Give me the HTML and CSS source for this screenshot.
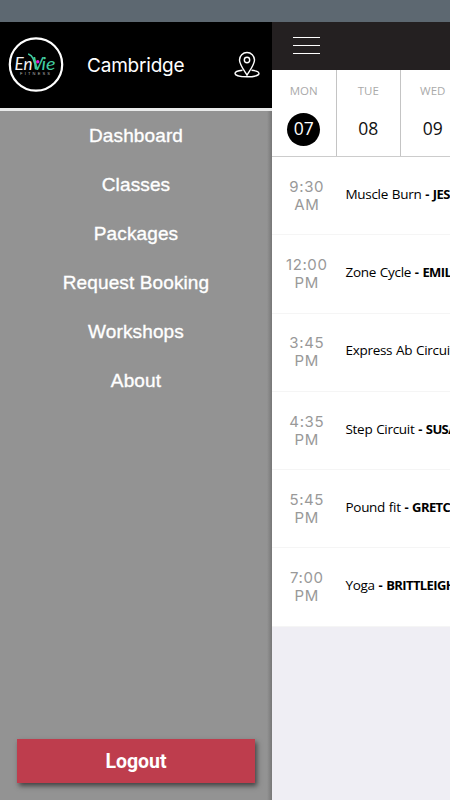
FILE: index.html
```html
<!DOCTYPE html>
<html lang="en">
  <head>
    <meta charset="UTF-8" />
    <meta name="viewport" content="width=device-width, initial-scale=1.0" />
    <title>EnVie Fitness</title>
    <link rel="stylesheet" href="styles.css">
  </head>
  <body>
    <div class="status-bar"></div>
    <div class="app">
      <aside class="drawer">
        <header class="drawer-header">
          <svg class="logo" viewBox="0 0 56 56" width="56" height="56">
            <circle cx="28" cy="27.500" r="26.2" fill="#000" stroke="#fff" stroke-width="2.2" />
            <text class="logo-name" x="6.5" y="32.500" fill="#f4f4f4" textLength="18" lengthAdjust="spacingAndGlyphs">En</text>
            <text class="logo-name" x="24.500" y="32.500" fill="#42cda0">V</text>
            <text class="logo-name" x="33.500" y="32.500" fill="#42cda0" textLength="14" lengthAdjust="spacingAndGlyphs">ie</text>
            <path d="M20.800 17.200c4 1.500 6 6 6.700 14.500" fill="none" stroke="#42cda0" stroke-width="1.600" stroke-linecap="round" />
            <circle cx="29.700" cy="24.800" r="1.700" fill="#e01fd4" />
            <text class="logo-sub" x="12" y="37.500" textLength="30">FITNESS</text>
          </svg>
          <h1>Cambridge</h1>
          <svg class="pin" viewBox="0 0 26 28" width="26" height="28" fill="none" stroke="#fff" stroke-width="1.400">
            <path d="M13 24.200C10.500 20 5.500 13.500 5.500 9a7.500 7.500 0 0 1 15 0c0 4.500-5 11-7.500 15.200z" />
            <circle cx="13" cy="9" r="2.700" />
            <path d="M8.500 19.300C4 19.700 1 20.900 1 22.500c0 1.900 5.200 3.300 12 3.300s12-1.400 12-3.300c0-1.600-3-2.800-7.500-3.200" />
          </svg>
        </header>
        <nav class="menu">
          <a href="#">Dashboard</a>
          <a href="#">Classes</a>
          <a href="#">Packages</a>
          <a href="#">Request Booking</a>
          <a href="#">Workshops</a>
          <a href="#">About</a>
        </nav>
        <button class="logout">Logout</button>
      </aside>
      <main class="schedule">
        <div class="topbar">
          <button class="menu-btn" aria-label="Menu"><span></span><span></span><span></span></button>
        </div>
        <div class="days">
          <div class="day active"><span>MON</span><b>07</b></div>
          <div class="day"><span>TUE</span><b>08</b></div>
          <div class="day"><span>WED</span><b>09</b></div>
        </div>
        <ul class="classes">
          <li><time>9:30<br>AM</time><p>Muscle Burn <strong>- JESS</strong></p></li>
          <li><time>12:00<br>PM</time><p>Zone Cycle <strong>- EMILY</strong></p></li>
          <li><time>3:45<br>PM</time><p>Express Ab Circuit</p></li>
          <li><time>4:35<br>PM</time><p>Step Circuit <strong>- SUSAN</strong></p></li>
          <li><time>5:45<br>PM</time><p>Pound fit <strong>- GRETCHEN</strong></p></li>
          <li><time>7:00<br>PM</time><p>Yoga <strong>- BRITTLEIGH</strong></p></li>
        </ul>
      </main>
    </div>
  </body>
</html>
```
FILE: styles.css
```css
* {
  margin: 0;
  padding: 0;
  box-sizing: border-box;
}

body {
  height: 100vh;
  overflow: hidden;
  font-family: "Liberation Sans", Arial, sans-serif;
  background: #efeef4;
}

.status-bar {
  height: 22px;
  background: #5d6871;
}

.app {
  display: flex;
  height: calc(100vh - 22px);
}

/* Side drawer */
.drawer {
  flex: 0 0 272px;
  display: flex;
  flex-direction: column;
  background: linear-gradient(to left, #777 0, #939393 5px);
}

.drawer-header {
  display: flex;
  align-items: center;
  height: 89px;
  padding: 0 12px 0 8px;
  background: #000;
  border-bottom: 3px solid #e9eaea;
}

.logo-name {
  font: italic 17px "Lato", sans-serif;
}

.logo-sub {
  font: 4px "Liberation Sans", sans-serif;
  fill: #bbb;
}

.drawer-header h1 {
  margin-left: 23px;
  font-family: "Inter", sans-serif;
  font-size: 19px;
  font-weight: 400;
  letter-spacing: -0.2px;
  color: #fff;
}

.pin {
  margin-left: auto;
}

.menu {
  flex: 1;
  display: flex;
  flex-direction: column;
  align-items: center;
}

.menu a {
  line-height: 49px;
  font-size: 19px;
  letter-spacing: 0.12px;
  color: #fff;
  text-decoration: none;
  -webkit-text-stroke: 0.35px #fff;
}

.logout {
  height: 44px;
  margin: 0 17px 17px;
  border: none;
  background: #be3d4d;
  box-shadow: 2px 3px 5px rgba(0, 0, 0, 0.55);
  color: #fff;
  font-family: "Roboto", sans-serif;
  font-size: 19.5px;
  font-weight: 700;
}

/* Schedule */
.schedule {
  flex: 1;
  min-width: 0;
  overflow: hidden;
}

.topbar {
  display: flex;
  height: 48px;
  padding: 15px 21px;
  background: #242021;
}

.menu-btn {
  display: flex;
  flex-direction: column;
  justify-content: space-between;
  width: 27px;
  height: 17px;
  border: none;
  background: none;
}

.menu-btn span {
  width: 27px;
  height: 1px;
  background: #fff;
}

.days {
  display: flex;
  width: 193px;
  height: 87px;
  background: #fff;
  border-bottom: 1px solid #ccc;
}

.day {
  flex: 0 0 64.5px;
  display: flex;
  flex-direction: column;
  align-items: center;
  padding-top: 12px;
  border-right: 1px solid #c4c4c4;
  font-family: "Open Sans", sans-serif;
}

.day span {
  line-height: 18px;
  font-size: 11.5px;
  color: #aaa;
}

.day b {
  width: 33px;
  height: 33px;
  margin-top: 13px;
  border-radius: 50%;
  line-height: 31px;
  font-size: 17.5px;
  font-weight: 400;
  text-align: center;
  color: #111;
}

.day.active b {
  background: #000;
  color: #fff;
}

.classes {
  list-style: none;
}

.classes li {
  display: flex;
  align-items: center;
  height: 78.3px;
  background: #fff;
  border-bottom: 1px solid #f5f5f5;
}

.classes time {
  flex: 0 0 73.5px;
  padding-right: 4px;
  font-family: "Inter", sans-serif;
  font-size: 15px;
  line-height: 18px;
  letter-spacing: 0.6px;
  text-align: center;
  color: #999;
}

.classes p {
  padding-bottom: 4px;
  font-family: "Open Sans", sans-serif;
  font-size: 13.5px;
  letter-spacing: -0.3px;
  word-spacing: 0.6px;
  white-space: nowrap;
  color: #000;
}

.classes strong {
  font-size: 13px;
  letter-spacing: -0.6px;
  word-spacing: 1.2px;
}
```
